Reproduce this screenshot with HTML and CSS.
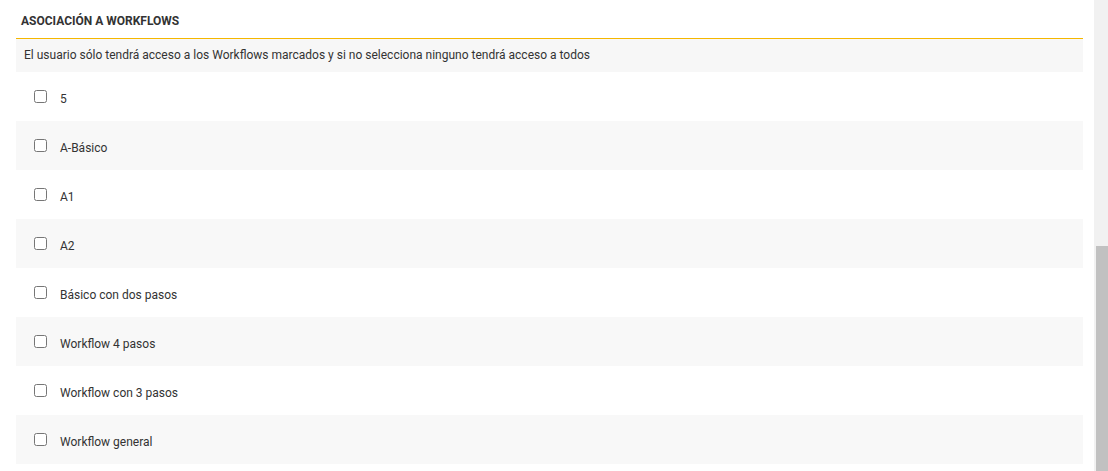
FILE: index.html
```html
<!DOCTYPE html>
<html lang="es">
<head>
<meta charset="utf-8">
<title>Asociación a workflows</title>
<link rel="stylesheet" href="styles.css">
</head>
<body>
<div class="page">
  <main class="main">
    <section class="panel">
      <h2 class="title">ASOCIACIÓN A WORKFLOWS</h2>
      <p class="desc">El usuario sólo tendrá acceso a los Workflows marcados y si no selecciona ninguno tendrá acceso a todos</p>
      <ul class="list">
        <li class="row"><label class="item"><input type="checkbox" class="chk"><span>5</span></label></li>
        <li class="row"><label class="item"><input type="checkbox" class="chk"><span>A-Básico</span></label></li>
        <li class="row"><label class="item"><input type="checkbox" class="chk"><span>A1</span></label></li>
        <li class="row"><label class="item"><input type="checkbox" class="chk"><span>A2</span></label></li>
        <li class="row"><label class="item"><input type="checkbox" class="chk"><span>Básico con dos pasos</span></label></li>
        <li class="row"><label class="item"><input type="checkbox" class="chk"><span>Workflow 4 pasos</span></label></li>
        <li class="row"><label class="item"><input type="checkbox" class="chk"><span>Workflow con 3 pasos</span></label></li>
        <li class="row"><label class="item"><input type="checkbox" class="chk"><span>Workflow general</span></label></li>
      </ul>
    </section>
  </main>
  <div class="scrollbar"><div class="thumb"></div></div>
</div>
</body>
</html>
```

FILE: styles.css
```css
* { box-sizing: border-box; }
html, body { margin: 0; padding: 0; height: 100%; overflow: hidden; }
body {
  font-family: Roboto, "Liberation Sans", Arial, sans-serif;
  color: #333;
  background: #fff;
}
.page {
  display: flex;
  height: 471px;
}
.main {
  flex: 1;
  padding: 0 11px 0 16px;
}
.panel { margin: 0; }
.title {
  margin: 0;
  height: 39px;
  padding: 14px 0 0 5px;
  font-size: 12px;
  font-weight: 700;
  color: #333;
  border-bottom: 1px solid #f5b700;
  line-height: 14px;
}
.desc {
  margin: 0;
  height: 33px;
  padding: 9px 0 0 8px;
  background: #f7f7f7;
  font-size: 12px;
  line-height: 14px;
}
.list {
  list-style: none;
  margin: 0;
  padding: 0;
}
.row {
  height: 49px;
  display: flex;
  align-items: center;
  padding-left: 18px;
}
.row:nth-child(even) { background: #f8f8f8; }
.item {
  display: flex;
  align-items: center;
  gap: 13px;
  font-size: 12px;
  line-height: 14px;
  color: #333;
}
.chk {
  margin: 0;
  width: 13px;
  height: 13px;
}
.item span { position: relative; top: 2px; }
.scrollbar {
  width: 14px;
  background: #f1f1f1;
  display: flex;
  flex-direction: column;
  justify-content: flex-end;
  padding-left: 2px;
}
.thumb {
  height: 225px;
  background: #c1c1c1;
}
```
